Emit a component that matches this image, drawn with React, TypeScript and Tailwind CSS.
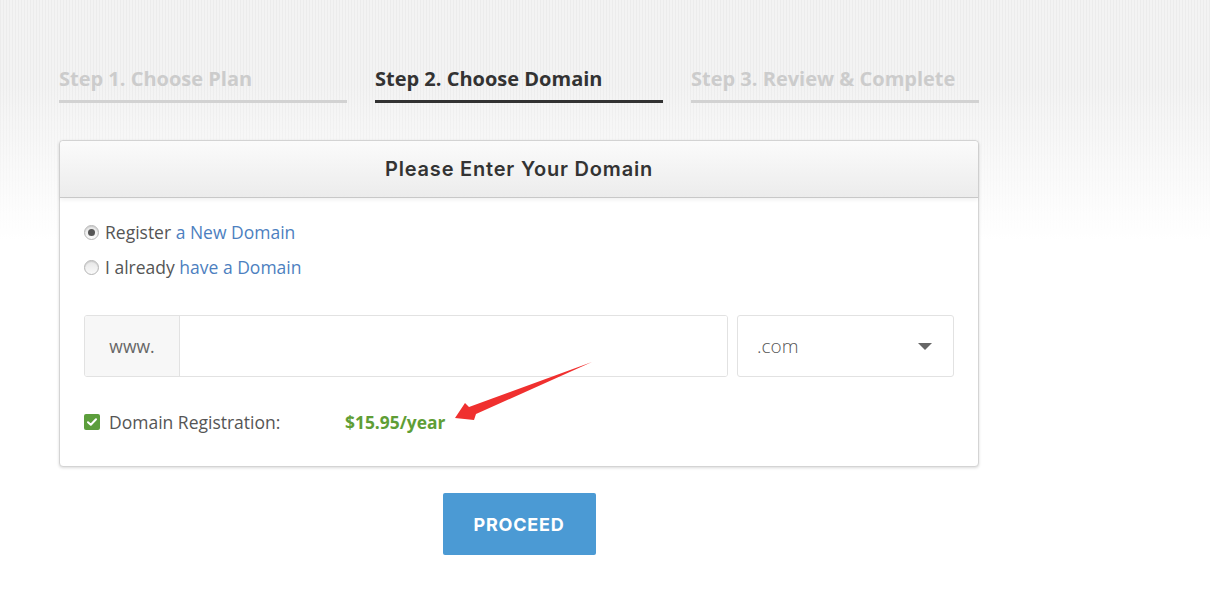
import { useState } from 'react'

const steps = [
  { label: 'Step 1. Choose Plan', active: false },
  { label: 'Step 2. Choose Domain', active: true },
  { label: 'Step 3. Review & Complete', active: false },
]

function StepTab({ label, active }: { label: string; active: boolean }) {
  return (
    <div
      className={`pb-[8px] border-b-[3px] text-[20px] leading-[26px] font-bold ${
        active ? 'border-[#333333] text-[#333333]' : 'border-[#d2d2d2] text-[#cccccc]'
      }`}
    >
      {label}
    </div>
  )
}

function Radio({ checked }: { checked: boolean }) {
  return (
    <span className="w-[15px] h-[15px] rounded-full border border-[#b5b5b5] bg-[linear-gradient(to_bottom,#e6e6e6,#fafafa)] shadow-[inset_0_1px_1px_rgba(0,0,0,0.12)] flex items-center justify-center shrink-0">
      {checked && <span className="w-[7px] h-[7px] rounded-full bg-[#555555]" />}
    </span>
  )
}

function Arrow() {
  return (
    <svg className="absolute left-0 top-0 pointer-events-none" width="1210" height="605" viewBox="0 0 1210 605">
      <polygon
        points="455,418 465,403 469,407 592,362 476,414 474,420"
        fill="#f0302f"
      />
    </svg>
  )
}

export default function App() {
  const [mode, setMode] = useState<'new' | 'own'>('new')
  const [domain, setDomain] = useState('')

  return (
    <div className="relative min-h-screen bg-white bg-no-repeat bg-[length:100%_240px] bg-[linear-gradient(to_bottom,rgba(255,255,255,0)_35%,#ffffff_100%),repeating-linear-gradient(90deg,#ececec_0px,#ececec_1px,#f3f3f3_1px,#f3f3f3_3px)] font-['Open_Sans',sans-serif]">
      <div className="w-[920px] ml-[59px] pt-[66px]">
        <div className="grid grid-cols-3 gap-[28px]">
          {steps.map((s) => (
            <StepTab key={s.label} label={s.label} active={s.active} />
          ))}
        </div>

        <div className="mt-[37px] bg-white border border-[#d4d4d4] rounded-[4px] shadow-[0_1px_3px_rgba(0,0,0,0.15)]">
          <div className="h-[57px] flex items-center justify-center rounded-t-[4px] border-b border-[#c8c8c8] bg-[linear-gradient(to_bottom,#fbfbfb,#ececec)] shadow-[0_2px_4px_rgba(0,0,0,0.06)]">
            <h2 className="font-['Inter',sans-serif] font-semibold text-[20px] text-[#333333] tracking-[0.8px]">
              Please Enter Your Domain
            </h2>
          </div>

          <div className="px-[24px] pt-[17px] pb-[31px]">
            <label className="flex items-center gap-[6px] h-[35px] text-[17.5px] text-[#555555] cursor-pointer" onClick={() => setMode('new')}>
              <Radio checked={mode === 'new'} />
              <span>
                Register <span className="text-[#4d7fc0]">a New Domain</span>
              </span>
            </label>
            <label className="flex items-center gap-[6px] h-[35px] text-[17.5px] text-[#555555] cursor-pointer" onClick={() => setMode('own')}>
              <Radio checked={mode === 'own'} />
              <span>
                I already <span className="text-[#4d7fc0]">have a Domain</span>
              </span>
            </label>

            <div className="mt-[30px] flex gap-[9px]">
              <div className="flex flex-1 h-[62px] border border-[#e2e2e2] rounded-[3px] overflow-hidden">
                <div className="w-[95px] bg-[#f7f7f7] border-r border-[#e2e2e2] flex items-center justify-center text-[17.5px] text-[#666666]">
                  www.
                </div>
                <input
                  value={domain}
                  onChange={(e) => setDomain(e.target.value)}
                  className="flex-1 px-4 text-[17px] text-[#555555] outline-none bg-white"
                />
              </div>
              <div className="w-[217px] h-[62px] border border-[#e2e2e2] rounded-[3px] flex items-center justify-between pl-[19px] pr-[21px]">
                <span className="text-[19px] text-[#555555] font-light">.com</span>
                <span className="w-0 h-0 border-l-[7px] border-r-[7px] border-t-[7px] border-l-transparent border-r-transparent border-t-[#666666]" />
              </div>
            </div>

            <div className="mt-[32px] flex items-center h-[26px]">
              <span className="w-[16px] h-[16px] rounded-[2px] bg-[#5c9e3c] flex items-center justify-center shrink-0">
                <svg width="10" height="8" viewBox="0 0 10 8">
                  <path d="M1 4.2 L3.8 6.8 L9 1.2" stroke="#fff" strokeWidth="2" fill="none" strokeLinecap="round" strokeLinejoin="round" />
                </svg>
              </span>
              <span className="ml-[9px] w-[236px] text-[17.5px] text-[#555555]">Domain Registration:</span>
              <span className="text-[17.4px] font-bold text-[#5f9e36]">$15.95/year</span>
            </div>
          </div>
        </div>

        <div className="flex justify-center mt-[26px]">
          <button className="w-[153px] h-[62px] bg-[#4b9ad4] rounded-[2px] text-white font-['Inter',sans-serif] font-bold text-[18px] tracking-[0.8px]">
            PROCEED
          </button>
        </div>
      </div>
      <Arrow />
    </div>
  )
}
